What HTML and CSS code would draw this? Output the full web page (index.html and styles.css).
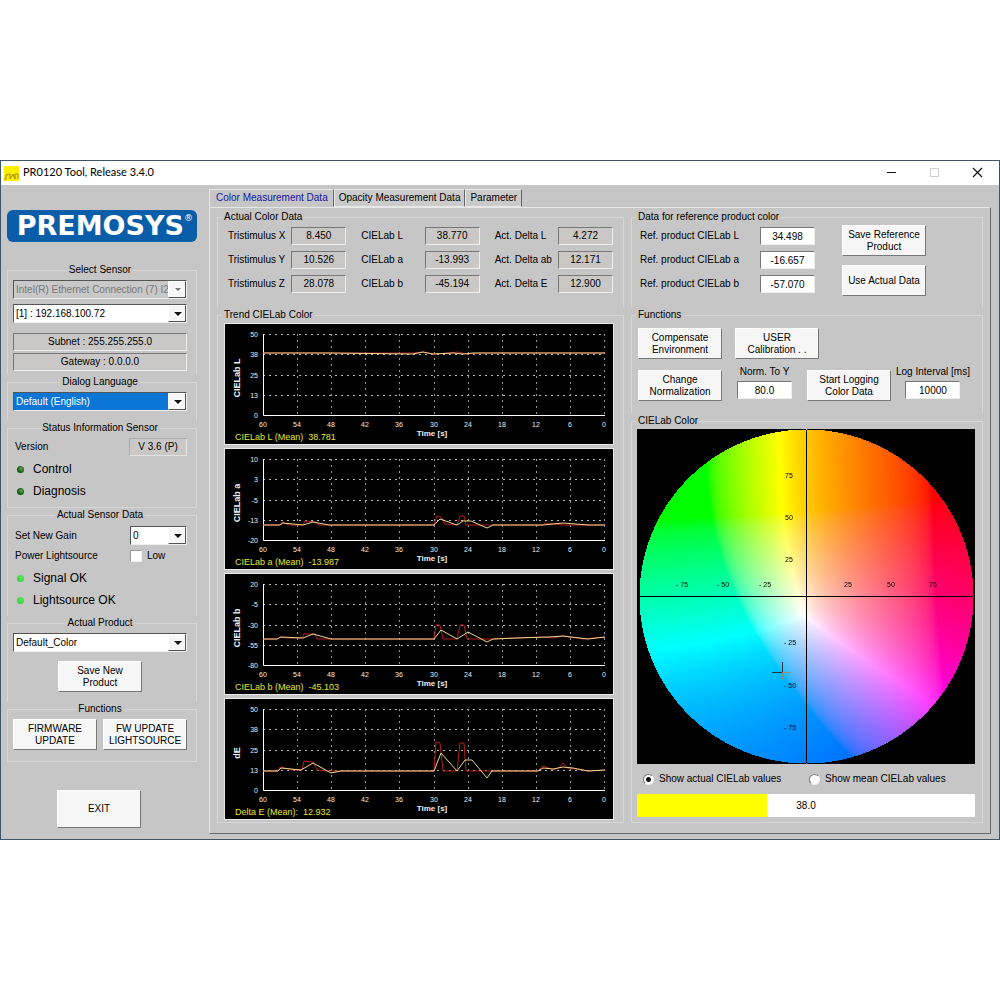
FILE: index.html
```html
<!DOCTYPE html>
<html lang="en">
<head>
<meta charset="utf-8">
<title>PR0120 Tool, Release 3.4.0</title>
<link rel="stylesheet" href="styles.css">
</head>
<body>
<div class="window">
  <header class="titlebar">
    <svg class="app-icon" width="15" height="15" viewBox="0 0 15 15" aria-hidden="true"><rect width="15" height="15" fill="#ffee00"/><path d="M0 13H2V9L6 8V13L9 8L11 13V8H14V13" fill="none" stroke="#9a8a00"/></svg>
    <h1 class="title">PR0120 Tool, Release 3.4.0</h1>
    <div class="window-buttons">
      <button class="win-btn" aria-label="Minimize"><svg width="12" height="12" viewBox="0 0 12 12"><path d="M2 5.500H11" stroke="#111"/></svg></button>
      <button class="win-btn" aria-label="Maximize" disabled><svg width="12" height="12" viewBox="0 0 12 12"><path d="M2.500 1.500H10.500V9.500H2.500Z" fill="none" stroke="#ccc"/></svg></button>
      <button class="win-btn" aria-label="Close"><svg width="12" height="12" viewBox="0 0 12 12"><path d="M2 1L11 10M11 1L2 10" stroke="#111" stroke-width="1.200"/></svg></button>
    </div>
  </header>
  <div class="content">
    <aside class="sidebar">
      <div class="logo">PREMOSYS<sup class="reg">®</sup></div>
      <fieldset class="group side-group">
        <legend>Select Sensor</legend>
        <span class="combo disabled"><select aria-label="Network adapter" disabled><option>Intel(R) Ethernet Connection (7) I2</option></select></span>
        <span class="combo"><select aria-label="Sensor"><option>[1] : 192.168.100.72</option></select></span>
        <output class="readout info">Subnet : 255.255.255.0</output>
        <output class="readout gateway">Gateway : 0.0.0.0</output>
      </fieldset>
      <fieldset class="group side-group language">
        <legend>Dialog Language</legend>
        <span class="combo selected"><select aria-label="Dialog language"><option>Default (English)</option></select></span>
      </fieldset>
      <fieldset class="group side-group status">
        <legend>Status Information Sensor</legend>
        <div class="row"><span>Version</span><output class="readout version">V 3.6 (P)</output></div>
        <div class="led-row"><i class="led dark"></i>Control</div>
        <div class="led-row"><i class="led dark"></i>Diagnosis</div>
      </fieldset>
      <fieldset class="group side-group sensor">
        <legend>Actual Sensor Data</legend>
        <div class="row"><label for="gain">Set New Gain</label><span class="combo gain"><select id="gain"><option>0</option></select></span></div>
        <div class="row power"><span>Power Lightsource</span><label class="check"><input type="checkbox">Low</label></div>
        <div class="led-row"><i class="led"></i>Signal OK</div>
        <div class="led-row"><i class="led"></i>Lightsource OK</div>
      </fieldset>
      <fieldset class="group side-group product">
        <legend>Actual Product</legend>
        <span class="combo"><select aria-label="Actual product"><option>Default_Color</option></select></span>
        <button class="btn">Save New<br>Product</button>
      </fieldset>
      <fieldset class="group side-group firmware">
        <legend>Functions</legend>
        <div class="row"><button class="btn">FIRMWARE<br>UPDATE</button><button class="btn">FW UPDATE<br>LIGHTSOURCE</button></div>
      </fieldset>
      <button class="btn exit">EXIT</button>
    </aside>

    <main class="main">
      <nav class="tabs" role="tablist">
        <button class="tab active" role="tab" aria-selected="true">Color Measurement Data</button>
        <button class="tab" role="tab">Opacity Measurement Data</button>
        <button class="tab" role="tab">Parameter</button>
      </nav>
      <div class="panel">
        <div class="column left">
          <fieldset class="group data-group">
            <legend>Actual Color Data</legend>
            <div class="readings">
              <label class="pair">Tristimulus X<output class="readout">8.450</output></label>
              <label class="pair">CIELab L<output class="readout">38.770</output></label>
              <label class="pair">Act. Delta L<output class="readout">4.272</output></label>
              <label class="pair">Tristimulus Y<output class="readout">10.526</output></label>
              <label class="pair">CIELab a<output class="readout">-13.993</output></label>
              <label class="pair">Act. Delta ab<output class="readout">12.171</output></label>
              <label class="pair">Tristimulus Z<output class="readout">28.078</output></label>
              <label class="pair">CIELab b<output class="readout">-45.194</output></label>
              <label class="pair">Act. Delta E<output class="readout">12.900</output></label>
            </div>
          </fieldset>
          <fieldset class="group trend-group">
            <legend>Trend CIELab Color</legend>
            <div class="charts" id="charts"></div>
          </fieldset>
        </div>
        <div class="column right">
          <fieldset class="group data-group">
            <legend>Data for reference product color</legend>
            <div class="reference">
              <div class="ref-values">
                <label class="pair">Ref. product CIELab L<input class="field" value="34.498"></label>
                <label class="pair">Ref. product CIELab a<input class="field" value="-16.657"></label>
                <label class="pair">Ref. product CIELab b<input class="field" value="-57.070"></label>
              </div>
              <div class="ref-buttons">
                <button class="btn">Save Reference<br>Product</button>
                <button class="btn">Use Actual Data</button>
              </div>
            </div>
          </fieldset>
          <fieldset class="group function-group">
            <legend>Functions</legend>
            <div class="functions">
              <div class="function-row"><button class="btn">Compensate<br>Environment</button><button class="btn">USER<br>Calibration . .</button></div>
              <div class="function-row second">
                <button class="btn">Change<br>Normalization</button>
                <label class="stack">Norm. To Y<input class="field" value="80.0"></label>
                <button class="btn">Start Logging<br>Color Data</button>
                <label class="stack interval">Log Interval [ms]<input class="field" value="10000"></label>
              </div>
            </div>
          </fieldset>
          <fieldset class="group wheel-group">
            <legend>CIELab Color</legend>
            <div class="wheel-body">
              <div class="wheel">
                <canvas id="wheel" width="338" height="335"></canvas>
                <svg class="wheel-scale" viewBox="0 0 338 335">
                  <path d="M169.500 1V334M2 167.500H336" stroke="#000"/>
                  <g text-anchor="middle">
                    <text x="152" y="49">75</text><text x="152" y="91">50</text><text x="152" y="133">25</text>
                    <text x="153" y="216">- 25</text><text x="153" y="259">- 50</text><text x="153" y="301">- 75</text>
                    <text x="45" y="158">- 75</text><text x="86" y="158">- 50</text><text x="128" y="158">- 25</text>
                    <text x="211" y="158">25</text><text x="254" y="158">50</text><text x="296" y="158">75</text>
                  </g>
                  <path d="M145.500 233V243M135 243.500H145" stroke="#234"/><path d="M145.500 243V251M145 243.500H154" stroke="#8d8a88"/>
                </svg>
              </div>
              <div class="radios">
                <label class="radio"><input type="radio" name="show" checked>Show actual CIELab values</label>
                <label class="radio"><input type="radio" name="show">Show mean CIELab values</label>
              </div>
              <div class="bar"><div class="bar-fill" style="width: 38.6%"></div><span class="bar-value">38.0</span></div>
            </div>
          </fieldset>
        </div>
      </div>
    </main>
  </div>
</div>
<script src="app.js"></script>
</body>
</html>
```
FILE: styles.css
```css
* { box-sizing: border-box; }
body {
  margin: 0;
  padding: 160px 0;
  background: #fff;
  color: #000;
  font: 10px/12px "Liberation Sans", Arial, sans-serif;
}
button, input, select { font: inherit; color: inherit; margin: 0; }
.window { background: #c6c6c6; border: 1px solid #3b566b; }
.titlebar { display: flex; align-items: center; height: 24px; padding-left: 3px; background: #fff; }
.title { flex: 1; margin: 0 0 2px 4px; font: 400 11px/16px Lato, "Liberation Sans", sans-serif; }
.window-buttons { display: flex; padding-right: 1px; }
.win-btn { width: 43px; height: 22px; padding: 0; border: 0; background: none; display: grid; place-items: center; }
.content { display: flex; padding-bottom: 5px; }
.sidebar { flex: 0 0 208px; padding: 25px 12px 0 6px; display: flex; flex-direction: column; }
.logo {
  display: flex; justify-content: flex-end;
  height: 32px; margin-bottom: 21px; padding-right: 4px;
  border-radius: 6px; background: #0a5da8; color: #fff;
  font: bold 27px/32px "DejaVu Sans", sans-serif;
}
.reg { font-size: 9px; line-height: 16px; font-weight: 400; }
.group { min-width: 0; margin: 0; padding: 0; border: 1px solid #d6d6d6; }
.group legend { padding: 0 2px; line-height: 14px; }
.side-group { display: flex; flex-direction: column; padding: 3px 9px 3px 5px; border-bottom-color: #c6c6c6; }
.side-group legend { margin: 0 auto; }
.side-group .combo + .combo { margin-top: 5px; }
.combo { position: relative; display: flex; height: 19px; }
.combo select {
  appearance: none; width: 100%; padding: 0 18px 0 2px;
  border: 1px solid; border-color: #555 #eee #eee #555; border-radius: 0;
  background: #fff; opacity: 1;
}
.combo::before { content: ""; position: absolute; right: 1px; top: 1px; width: 16px; bottom: 1px; background: #f6f6f6; border: 1px solid; border-color: #fff #555 #555 #fff; pointer-events: none; }
.combo::after { content: ""; position: absolute; right: 5px; top: 8px; border: 4px solid transparent; border-top-color: #111; border-bottom: 0; pointer-events: none; }
.combo.disabled select { background: #c9c9c9; color: #777; }
.combo.disabled::after { border-width: 3px 3px 0; border-top-color: #777; right: 6px; }
.combo.selected select { background: #0b76d6; color: #fff; }
.readout {
  display: block; flex: none; width: 55px; height: 18px; line-height: 16px; text-align: center;
  background: #c9c8c7; border: 1px solid; border-color: #777 #eee #eee #777;
}
.readout.info { width: 100%; margin-top: 10px; }
.readout.gateway { width: 100%; margin-top: 2px; }
.readout.version { width: 58px; border-color: #aaa #e2e2e2 #e2e2e2 #aaa; }
.language { padding-bottom: 9px; }
.row { display: flex; justify-content: space-between; align-items: center; padding-left: 2px; }
.status { padding-bottom: 5px; border-bottom-color: #d6d6d6; }
.led-row { display: flex; align-items: center; height: 22px; padding-left: 4px; font-size: 12px; }
.status .row { margin-bottom: 2px; }
.led { width: 7px; height: 7px; margin-right: 9px; border-radius: 50%; background: radial-gradient(circle at 60% 35%, #5be65b, #31cb31); }
.led.dark { background: radial-gradient(circle at 60% 40%, #6c9c60, #0c5c0a 60%); }
.gain { width: 57px; }
.sensor { padding-top: 4px; padding-bottom: 4px; }
.check { display: flex; align-items: center; width: 57px; }
.check input { appearance: none; width: 12px; height: 12px; margin-right: 5px; background: #fff; border: 1px solid; border-color: #999 #eee #eee #999; }
.power { height: 22px; }
.btn {
  width: 84px; height: 31px; padding: 0; line-height: 12px; white-space: nowrap;
  background: #f6f6f6; border: 1px solid; border-color: #fff #777 #777 #fff; border-radius: 0;
}
.product .btn { margin: 9px auto 6px 45px; }
.firmware .row { padding-left: 0; }
.firmware { padding-bottom: 11px; border-bottom-color: #d6d6d6; }
.exit { height: 38px; margin: 28px 0 0 50px; }

.main { flex: 1; min-width: 0; padding: 4px 8px 0 0; display: flex; flex-direction: column; }
.tabs { display: flex; }
.tab {
  height: 18px; padding: 0 4px; line-height: 14px; background: #cbcbcb;
  border: 1px solid; border-color: #e8e8e8 #666 #e8e8e8 #e8e8e8; border-radius: 0;
}
.tab.active { padding: 0 5px 0 6px; border-bottom-color: #c6c6c6; background: #c6c6c6; color: #1414a8; }
.panel {
  flex: 1; display: flex; gap: 7px; padding: 2px 7px 10px;
  border: 1px solid; border-color: #e8e8e8 #666 #666 #e8e8e8;
}
.column { display: flex; flex-direction: column; min-width: 0; }
.left { flex: 407; }
.right { flex: 352; }
.column legend { margin-left: 4px; }
.data-group { height: 98px; border-bottom-color: #c6c6c6; }
.readings { display: grid; grid-template-columns: repeat(3, 1fr); gap: 6px 15px; padding: 3px 10px 0; }
.pair { display: flex; align-items: center; justify-content: space-between; white-space: nowrap; }
.trend-group { flex: 1; }
.charts { display: flex; flex-direction: column; gap: 5px; padding: 2px 10px 3px 7px; }
.chart { display: block; width: 100%; height: auto; background: #000; outline: 1px solid #e8e8e8; font-family: "Liberation Sans", sans-serif; }
.chart text { fill: #eee; font-size: 7px; }
.chart .axis { font-size: 9px; font-weight: 700; }
.chart .time { font-size: 8px; font-weight: 700; }
.chart .mean { fill: #e6e636; font-size: 9px; }
.field {
  width: 55px; height: 18px; padding: 0; text-align: center; background: #fff;
  border: 1px solid; border-color: #777 #eee #eee #777; border-radius: 0;
}
.reference { display: flex; padding: 1px 0 0 8px; gap: 27px; }
.ref-values { flex: 0 1 175px; display: grid; gap: 6px; padding-top: 2px; align-content: start; }
.ref-buttons { display: grid; gap: 9px; align-content: start; }
.function-group { height: 106px; border-bottom-color: #c6c6c6; }
.functions { padding: 6px 0 0 6px; }
.function-row { display: flex; gap: 13px; }
.function-row.second { margin-top: 11px; gap: 15px; }
.second .stack { display: grid; gap: 3px; justify-items: center; align-content: start; margin-top: -4px; white-space: nowrap; }
.second .interval { margin-left: -10px; }
.wheel-group { flex: 1; }
.wheel-body { padding: 1px 7px 3px 5px; }
.wheel { position: relative; background: #000; }
.wheel canvas { display: block; width: 100%; height: auto; }
.wheel-scale { position: absolute; inset: 0; width: 100%; height: 100%; font: 7px "Liberation Sans", sans-serif; }
.radios { display: flex; height: 30px; align-items: center; padding-left: 6px; }
.radio { display: flex; align-items: center; width: 171px; }
.radio input {
  appearance: none; width: 11px; height: 11px; margin-right: 5px; border-radius: 50%;
  background: #fff; border: 1px solid; border-color: #777 #eee #eee #777;
}
.radio input:checked { background: radial-gradient(circle, #111 0 2px, #fff 3px); }
.bar { position: relative; height: 23px; background: #fff; }
.bar-fill { height: 100%; background: #ff0; }
.bar-value { position: absolute; inset: 0; text-align: center; line-height: 23px; }
```
FILE: app.js
```js
// Trend charts: horizontal positions in plot units 0..342, vertical 0..81
const charts = [
  { axis: 'CIELab L', mean: 'CIELab L (Mean)  38.781', ticks: ['50', '38', '25', '13', '0'],
    red: '0,19 150,19 160,18 170,20 185,19 195,18 203,20 215,19 342,19',
    line: '0,19 65,19 150,20 160,18 170,20 190,19 200,20 210,19 342,19' },
  { axis: 'CIELab a', mean: 'CIELab a (Mean)  -13.987', ticks: ['10', '3', '-5', '-13', '-20'],
    red: '0,66 17,66 19,63 26,66 40,66 42,62 52,63 56,66 171,66 174,57 178,58 182,65 194,66 197,57 201,57 203,66 222,66 228,66 280,66 282,64 300,66 342,66',
    line: '0,66 17,66 20,64 40,66 50,63 66,66 171,66 177,60 194,66 200,62 208,62 224,69 230,66 280,66 300,64 325,66 342,66' },
  { axis: 'CIELab b', mean: 'CIELab b (Mean)  -45.103', ticks: ['20', '-5', '-30', '-55', '-80'],
    red: '0,55 15,55 17,53 24,54 39,54 41,50 52,50 54,55 171,55 173,41 177,41 180,55 194,55 197,41 201,41 204,55 230,55 250,54 280,53 290,54 300,52 320,55 342,53',
    line: '0,55 14,55 18,53 40,54 50,50 68,55 171,55 178,46 194,55 205,48 224,58 230,55 255,54 285,53 300,52 325,55 342,53' },
  { axis: 'dE', mean: 'Delta E (Mean):  12.932', ticks: ['50', '38', '25', '13', '0'],
    red: '0,62 15,62 17,58 30,61 39,61 41,52 50,53 54,61 64,62 171,62 173,33 177,34 180,62 194,62 197,34 201,34 203,62 275,62 280,57 291,61 297,58 300,54 304,59 313,60 325,62 342,61',
    line: '0,62 15,62 18,59 38,61 50,54 68,64 78,62 171,62 178,44 194,62 202,51 209,51 224,69 229,62 275,62 280,59 290,60 300,58 310,59 325,62 342,61' }
];
const times = ['60', '54', '48', '42', '36', '30', '24', '18', '12', '6', '0'];

document.getElementById('charts').innerHTML = charts.map(c => {
  let grid = '', labels = '';
  c.ticks.forEach((t, i) => {
    const y = [10, 30, 51, 71, 91][i];
    if (i < 4) grid += `<path d="M38 ${y}.5H380" stroke="#bbb" stroke-dasharray="2 4"/>`;
    labels += `<text x="33" y="${y + 3}" text-anchor="end">${t}</text>`;
  });
  times.forEach((t, i) => {
    const x = Math.round(38 + i * 34.1);
    if (i) grid += `<path d="M${x}.5 10V91" stroke="#999" stroke-dasharray="2 4"/>`;
    labels += `<text x="${x}" y="103" text-anchor="middle">${t}</text>`;
  });
  return `<svg class="chart" viewBox="0 0 388 120" role="img" aria-label="${c.axis}">${grid}
    <path d="M38.500 10V91.500H380" fill="none" stroke="#fff"/>
    <g transform="translate(38 10)" fill="none"><polyline points="${c.red}" stroke="#b51f1f"/><polyline points="${c.line}" stroke="#f0d890"/></g>
    ${labels}<text class="axis" x="-54" y="15" text-anchor="middle" transform="rotate(-90)">${c.axis}</text>
    <text class="time" x="207" y="112" text-anchor="middle">Time [s]</text>
    <text class="mean" x="10" y="116" xml:space="preserve">${c.mean}</text></svg>`;
}).join('');

// Colour disc: the a/b plane at L = 50, each colour scaled to full brightness
const canvas = document.getElementById('wheel');
const ctx = canvas.getContext('2d');
const { width, height } = canvas;
const image = ctx.createImageData(width, height);
const invert = f => (f > 6 / 29 ? f ** 3 : (f - 16 / 116) / 7.787);
const gamma = v => (v <= 0 ? 0 : v < 0.0031308 ? 12.92 * v : 1.055 * v ** (1 / 2.4) - 0.055);
const radius = 167;
for (let py = 0; py < height; py++) {
  for (let px = 0; px < width; px++) {
    const i = (py * width + px) * 4;
    const dx = px - 169, dy = 167 - py;
    image.data[i + 3] = 255;
    if (dx * dx + dy * dy > radius * radius) continue;
    const a = dx / 1.69, b = dy / 1.69, fy = 66 / 116;
    const X = 0.964 * invert(fy + a / 500), Y = invert(fy), Z = 0.825 * invert(fy - b / 200);
    const rgb = [
      3.2406 * X - 1.5372 * Y - 0.4986 * Z,
      -0.9689 * X + 1.8758 * Y + 0.0415 * Z,
      0.0557 * X - 0.204 * Y + 1.057 * Z
    ].map(gamma);
    const max = Math.max(...rgb);
    rgb.forEach((v, k) => { image.data[i + k] = 255 * v / max; });
  }
}
ctx.putImageData(image, 0, 0);
```
